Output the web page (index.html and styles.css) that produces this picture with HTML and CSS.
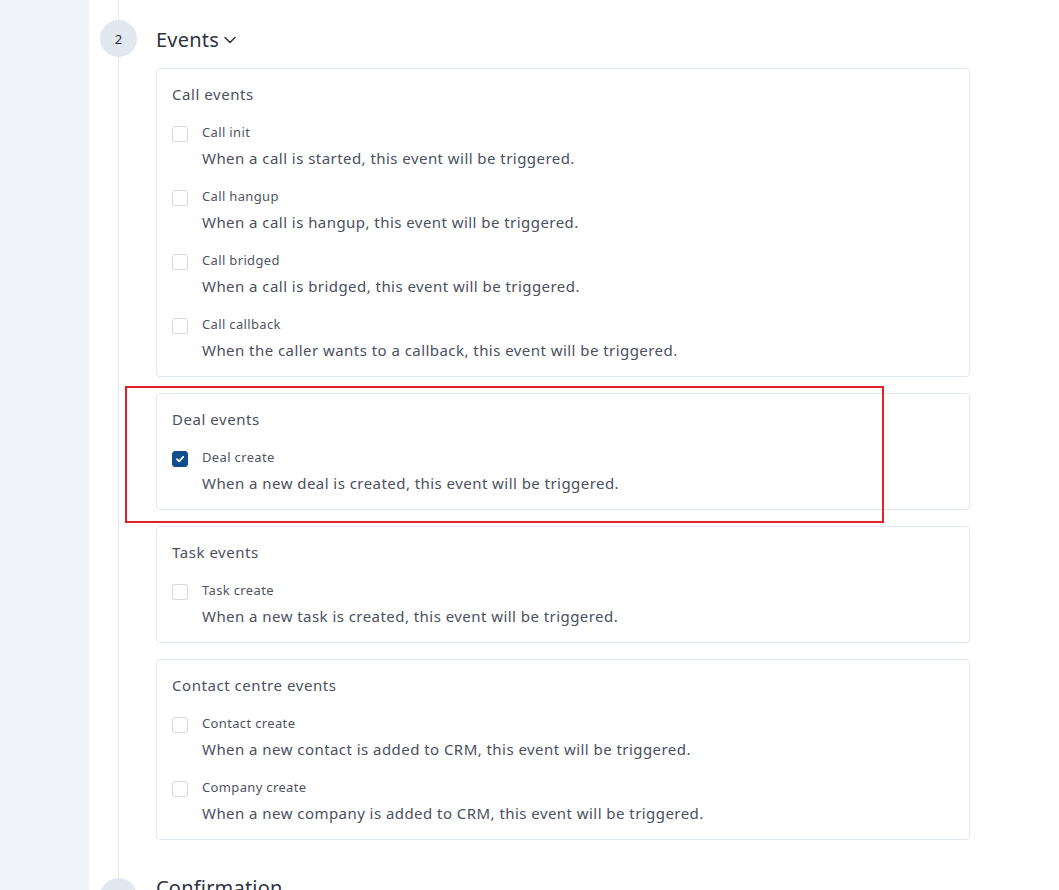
FILE: index.html
```html
<!DOCTYPE html>
<html>
<head>
<meta charset="utf-8">
<link rel="stylesheet" href="styles.css">
</head>
<body>
<div class="layout">
  <aside class="sidebar"></aside>
  <main class="main">
    <section class="step">
      <div class="rail"><div class="num">2</div></div>
      <div class="content">
        <div class="step-head">
          <span class="step-title">Events</span>
          <svg class="chev" width="14" height="14" viewBox="0 0 14 14"><path d="M2 4.5 L7 9.5 L12 4.5" fill="none" stroke="#2d3340" stroke-width="1.5" stroke-linecap="round" stroke-linejoin="round"/></svg>
        </div>
        <div class="cards">
          <div class="card">
            <div class="card-title">Call events</div>
            <div class="item">
              <div class="row"><span class="box"></span><span class="label">Call init</span></div>
              <div class="desc">When a call is started, this event will be triggered.</div>
            </div>
            <div class="item">
              <div class="row"><span class="box"></span><span class="label">Call hangup</span></div>
              <div class="desc">When a call is hangup, this event will be triggered.</div>
            </div>
            <div class="item">
              <div class="row"><span class="box"></span><span class="label">Call bridged</span></div>
              <div class="desc">When a call is bridged, this event will be triggered.</div>
            </div>
            <div class="item">
              <div class="row"><span class="box"></span><span class="label">Call callback</span></div>
              <div class="desc">When the caller wants to a callback, this event will be triggered.</div>
            </div>
          </div>
          <div class="card highlighted">
            <div class="card-title">Deal events</div>
            <div class="item">
              <div class="row"><span class="box checked"><svg width="10" height="10" viewBox="0 0 10 10"><path d="M2 5.2 L4.2 7.3 L8.2 2.8" fill="none" stroke="#fff" stroke-width="1.8" stroke-linecap="round" stroke-linejoin="round"/></svg></span><span class="label">Deal create</span></div>
              <div class="desc">When a new deal is created, this event will be triggered.</div>
            </div>
            <div class="redbox"></div>
          </div>
          <div class="card">
            <div class="card-title">Task events</div>
            <div class="item">
              <div class="row"><span class="box"></span><span class="label">Task create</span></div>
              <div class="desc">When a new task is created, this event will be triggered.</div>
            </div>
          </div>
          <div class="card">
            <div class="card-title">Contact centre events</div>
            <div class="item">
              <div class="row"><span class="box"></span><span class="label">Contact create</span></div>
              <div class="desc">When a new contact is added to CRM, this event will be triggered.</div>
            </div>
            <div class="item">
              <div class="row"><span class="box"></span><span class="label">Company create</span></div>
              <div class="desc">When a new company is added to CRM, this event will be triggered.</div>
            </div>
          </div>
        </div>
      </div>
    </section>
    <section class="step">
      <div class="rail"><div class="num">3</div></div>
      <div class="content">
        <div class="step-head top">
          <span class="step-title">Confirmation</span>
        </div>
      </div>
    </section>
  </main>
</div>
</body>
</html>
```
FILE: styles.css
```css
html, body {
  margin: 0;
  padding: 0;
  background: #ffffff;
  font-family: "Noto Sans", "Open Sans", sans-serif;
  height: 890px;
  overflow: hidden;
}
.layout {
  display: flex;
  height: 890px;
  overflow: hidden;
}
.sidebar {
  width: 89px;
  flex: 0 0 89px;
  background: #f1f4f9;
}
.main {
  flex: 1;
  display: flex;
  flex-direction: column;
}
.step {
  display: grid;
  grid-template-columns: 67px 814px;
}
.rail {
  background: linear-gradient(#e2e8f0, #e2e8f0) no-repeat 29px 0 / 1px 100%;
  padding-top: 20px;
}
.num {
  width: 37px;
  height: 37px;
  margin-left: 11px;
  border-radius: 50%;
  background: #e2e8f0;
  color: #1f2937;
  font-size: 13px;
  display: flex;
  align-items: center;
  justify-content: center;
}
.content {
  padding-top: 20px;
  padding-bottom: 18px;
}
.step-head {
  height: 37px;
  display: flex;
  align-items: center;
  gap: 4px;
}
.step-head.top {
  align-items: flex-start;
}
.step-title {
  font-size: 20px;
  color: #2d3340;
  letter-spacing: 0.2px;
  line-height: 24px;
  margin-top: 2px;
}
.step-head.top .step-title {
  margin-top: 0;
  line-height: 20px;
}
.chev {
  margin-top: 3px;
}
.cards {
  margin-top: 11px;
  display: flex;
  flex-direction: column;
  gap: 16px;
}
.card {
  border: 1px solid #e2e8f0;
  border-radius: 4px;
  padding: 15px;
  display: flex;
  flex-direction: column;
  gap: 18px;
  position: relative;
}
.card-title {
  font-size: 15px;
  line-height: 22px;
  color: #4a5060;
  letter-spacing: 0.55px;
  margin-top: -1px;
}
.item {
  display: flex;
  flex-direction: column;
  gap: 6px;
}
.row {
  display: flex;
  align-items: center;
  height: 18px;
}
.box {
  width: 14px;
  height: 14px;
  border: 1px solid #d3d8df;
  border-radius: 3px;
  margin-top: 3px;
  margin-right: 14px;
  background: #fff;
  display: flex;
  align-items: center;
  justify-content: center;
  box-sizing: content-box;
}
.box.checked {
  background: #0f4d8c;
  border-color: #0f4d8c;
}
.label {
  font-size: 13px;
  color: #50555f;
  letter-spacing: 0.35px;
}
.desc {
  font-size: 15px;
  line-height: 22px;
  color: #4a5060;
  padding-left: 30px;
  letter-spacing: 0.45px;
}
.redbox {
  position: absolute;
  left: -32px;
  top: -8px;
  width: 755px;
  height: 133px;
  border: 2px solid #e5202a;
  pointer-events: none;
}
```
